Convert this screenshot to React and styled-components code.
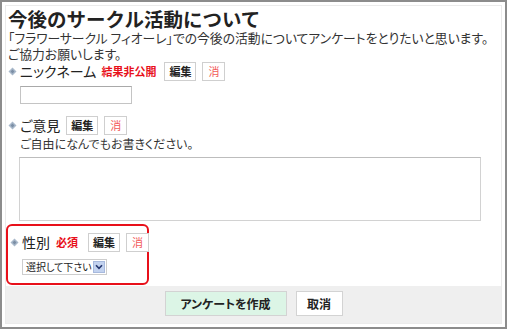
import React from 'react';
import styled, { createGlobalStyle } from 'styled-components';

const Global = createGlobalStyle`
  body {
    margin: 0;
    background: #fff;
    font-family: "Noto Sans CJK JP", "Noto Sans", sans-serif;
    color: #222;
  }
`;

const Frame = styled.div`
  box-sizing: border-box;
  width: 507px;
  height: 329px;
  border: 2px solid #8c8c8c;
  padding: 3px;
`;

const Panel = styled.div`
  box-sizing: border-box;
  height: 100%;
  border: 1px solid #ebebeb;
  display: flex;
  flex-direction: column;
`;

const Body = styled.div`
  padding: 0 0 0 2px;
`;

const Title = styled.h1`
  margin: 0;
  padding-top: 1px;
  font-size: 19.5px;
  line-height: 23px;
  font-weight: 700;
`;

const Desc = styled.p`
  margin: 0;
  font-size: 12.8px;
  line-height: 16px;
  color: #333;
  font-feature-settings: "palt";
  white-space: nowrap;
`;

const Item = styled.div`
  box-sizing: border-box;
  ${(p) =>
    p.$boxed &&
    `
    width: 143px;
    margin-left: -2px;
    margin-top: 3px;
    padding: 7px 0 7px 2px;
    border: 2px solid #e8101a;
    border-radius: 6px;
  `}
`;

const Head = styled.div`
  display: flex;
  align-items: center;
  height: 19px;
  white-space: nowrap;
  margin-top: ${(p) => p.$top || 0}px;
  & > * {
    flex: none;
  }
`;

const Diamond = () => (
  <svg width="12" height="9" viewBox="0 0 12 9">
    <path d="M4.5 0.5 L8.5 4.5 L4.5 8.5 L0.5 4.5 Z" fill="#a8b8ca" />
    <path d="M4.5 2.6 L6.4 4.5 L4.5 6.4 L2.6 4.5 Z" fill="#7b8ea5" />
  </svg>
);

const Label = styled.span`
  font-size: 14px;
  line-height: 19px;
  font-feature-settings: "palt";
  color: #222;
`;

const Tag = styled.span`
  margin-left: ${(p) => p.$gap}px;
  font-size: 11px;
  line-height: 19px;
  font-weight: 700;
  color: #e8101a;
`;

const Small = styled.button`
  box-sizing: border-box;
  height: 19px;
  margin-left: ${(p) => p.$gap}px;
  padding: 0 ${(p) => (p.$danger ? 5 : 4)}px;
  border: 1px solid #cfcfcf;
  background: #fff;
  font-family: inherit;
  font-size: 11px;
  line-height: 17px;
  font-weight: ${(p) => (p.$danger ? 400 : 700)};
  color: ${(p) => (p.$danger ? '#f25a5a' : '#222')};
`;

const Indent = styled.div`
  padding-left: 12px;
`;

const Input = styled.input`
  box-sizing: border-box;
  display: block;
  width: 112px;
  height: 18px;
  margin-top: 5px;
  border: 1px solid #c4c4c4;
  border-top-color: #a9a9a9;
  outline: none;
`;

const Hint = styled.div`
  margin-top: 1px;
  font-size: 12px;
  line-height: 16px;
  color: #333;
  font-feature-settings: "palt";
`;

const Area = styled.textarea`
  box-sizing: border-box;
  display: block;
  width: 462px;
  height: 64px;
  margin: 5px 0 0 -1px;
  border: 1px solid #d2d2d2;
  border-top-color: #bdbdbd;
  resize: none;
  outline: none;
`;

const SelectBox = styled.div`
  box-sizing: border-box;
  display: inline-flex;
  align-items: center;
  gap: 1px;
  height: 16px;
  margin-top: 6px;
  border: 1px solid #cdcdcd;
  background: #fff;
  padding: 0 1px 0 3px;
`;

const SelectText = styled.span`
  font-size: 10px;
  line-height: 14px;
  color: #222;
  font-feature-settings: "palt";
  white-space: nowrap;
`;

const Arrow = styled.span`
  box-sizing: border-box;
  flex: none;
  width: 12px;
  height: 12px;
  display: flex;
  align-items: center;
  justify-content: center;
  background: #c2d2ef;
  border: 1px solid #a7b9dd;
`;

const Footer = styled.div`
  margin-top: auto;
  height: 37px;
  background: #efefef;
  display: flex;
  justify-content: center;
  align-items: flex-start;
  gap: 9px;
  padding-top: 5px;
  box-sizing: border-box;
`;

const Action = styled.button`
  box-sizing: border-box;
  height: 25px;
  width: ${(p) => p.$w}px;
  border: 1px solid #d3d3d3;
  background: ${(p) => (p.$primary ? '#dcf5e6' : '#fff')};
  font-family: inherit;
  font-size: 12px;
  font-weight: 700;
  color: #222;
  font-feature-settings: "palt";
`;

export default function App() {
  return (
    <>
      <Global />
      <Frame>
        <Panel>
          <Body>
            <Title>今後のサークル活動について</Title>
            <Desc>
              「フラワーサークル フィオーレ」での今後の活動についてアンケートをとりたいと思います。
              <br />
              ご協力お願いします。
            </Desc>

            <Item>
              <Head>
                <Diamond />
                <Label>ニックネーム</Label>
                <Tag $gap={5}>結果非公開</Tag>
                <Small $gap={8}>編集</Small>
                <Small $gap={6} $danger>消</Small>
              </Head>
              <Indent>
                <Input type="text" />
              </Indent>
            </Item>

            <Item>
              <Head $top={12}>
                <Diamond />
                <Label>ご意見</Label>
                <Small $gap={6}>編集</Small>
                <Small $gap={6} $danger>消</Small>
              </Head>
              <Indent>
                <Hint>ご自由になんでもお書きください。</Hint>
                <Area />
              </Indent>
            </Item>

            <Item $boxed>
              <Head>
                <Diamond />
                <Label>性別</Label>
                <Tag $gap={6}>必須</Tag>
                <Small $gap={10}>編集</Small>
                <Small $gap={6} $danger>消</Small>
              </Head>
              <Indent>
                <SelectBox>
                  <SelectText>選択して下さい</SelectText>
                  <Arrow>
                    <svg width="8" height="6" viewBox="0 0 8 6">
                      <path d="M1 1.2 L4 4.4 L7 1.2" fill="none" stroke="#24366e" strokeWidth="1.6" />
                    </svg>
                  </Arrow>
                </SelectBox>
              </Indent>
            </Item>
          </Body>

          <Footer>
            <Action $primary $w={122}>アンケートを作成</Action>
            <Action $w={47}>取消</Action>
          </Footer>
        </Panel>
      </Frame>
    </>
  );
}
